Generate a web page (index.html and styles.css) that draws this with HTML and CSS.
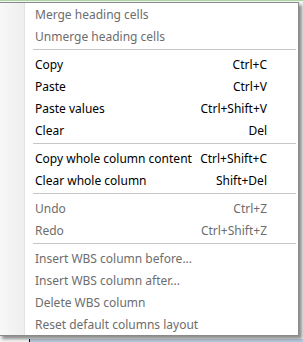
FILE: index.html
```html
<!DOCTYPE html>
<html lang="en">
<head>
    <meta charset="UTF-8">
    <title>Context menu</title>
    <link rel="stylesheet" href="styles.css">
</head>
<body>

<div class="sheet-top"></div>

<div class="menu">
    <div class="item disabled"><span class="label">Merge heading cells</span></div>
    <div class="item disabled"><span class="label">Unmerge heading cells</span></div>
    <div class="separator"></div>
    <div class="item"><span class="label">Copy</span><span class="key">Ctrl+C</span></div>
    <div class="item"><span class="label">Paste</span><span class="key">Ctrl+V</span></div>
    <div class="item"><span class="label">Paste values</span><span class="key">Ctrl+Shift+V</span></div>
    <div class="item"><span class="label">Clear</span><span class="key">Del</span></div>
    <div class="separator"></div>
    <div class="item"><span class="label">Copy whole column content</span><span class="key">Ctrl+Shift+C</span></div>
    <div class="item"><span class="label">Clear whole column</span><span class="key">Shift+Del</span></div>
    <div class="separator"></div>
    <div class="item disabled"><span class="label">Undo</span><span class="key">Ctrl+Z</span></div>
    <div class="item disabled"><span class="label">Redo</span><span class="key">Ctrl+Shift+Z</span></div>
    <div class="separator"></div>
    <div class="item disabled"><span class="label">Insert WBS column before...</span></div>
    <div class="item disabled"><span class="label">Insert WBS column after...</span></div>
    <div class="item disabled"><span class="label">Delete WBS column</span></div>
    <div class="item disabled"><span class="label">Reset default columns layout</span></div>
</div>

<div class="sheet-bottom"></div>

</body>
</html>
```

FILE: styles.css
```css
body {
    margin: 0;
    padding: 0;
    width: 303px;
    height: 342px;
    overflow: hidden;
    background-color: #f4f4f4;
    font-family: "Noto Sans", "Open Sans", sans-serif;
    font-size: 12px;
}

.sheet-top {
    height: 1px;
    margin-bottom: 1px;
    background-color: #a8d8a0;
}

.menu {
    position: relative;
    z-index: 1;
    width: 298px;
    margin-left: -1px;
    border: 1px solid #8a8a8a;
    background-color: #ffffff;
    background-image: linear-gradient(to right, #f8f8f8 0, #eeeeee 24px, #e2e3e3 24px, #e2e3e3 25px, #ffffff 25px);
    box-shadow: 3px 3px 3px rgba(60, 60, 60, 0.55);
}

.item {
    display: flex;
    align-items: center;
    justify-content: space-between;
    height: 22px;
    padding-left: 35px;
    padding-right: 31px;
    color: #000000;
    white-space: nowrap;
}

.item.disabled {
    color: #6d6d6d;
}

.separator {
    height: 6px;
    margin-left: 33px;
    margin-right: 2px;
    background-image: linear-gradient(to bottom, transparent 2px, #c6c6c6 2px, #c6c6c6 3px, #ffffff 3px, #ffffff 4px, transparent 4px);
}

.sheet-bottom {
    height: 10px;
    margin-top: 3px;
    margin-left: 29px;
    background-color: #b9c9dd;
    border-left: 1px solid #000000;
}
```
